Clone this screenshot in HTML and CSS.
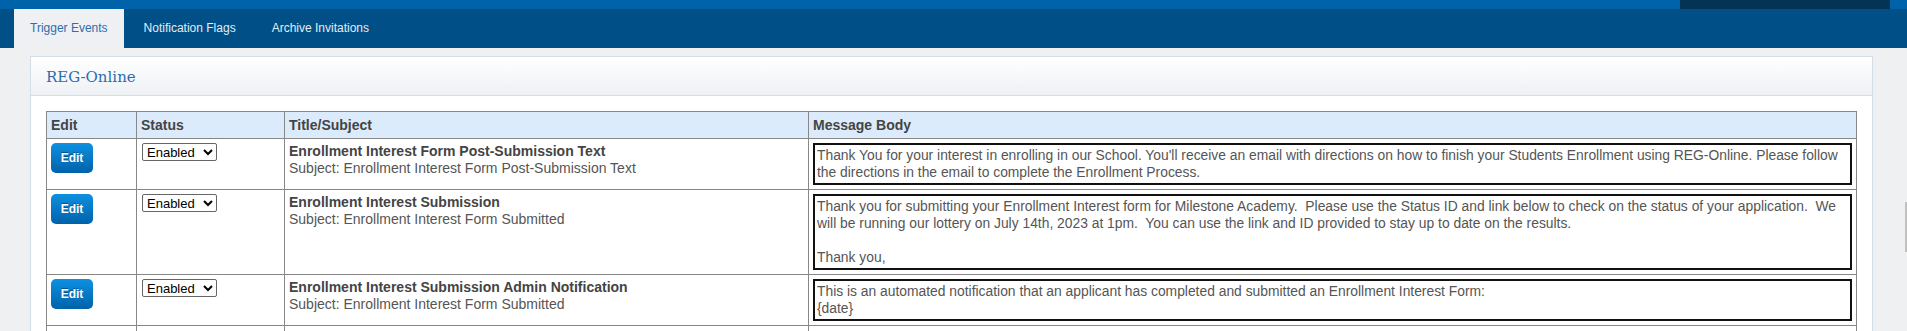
FILE: index.html
```html
<!DOCTYPE html>
<html lang="en">
<head>
    <meta charset="UTF-8">
    <title>Trigger Events</title>
    <link rel="stylesheet" href="styles.css">
</head>
<body>

    <div class="topbar">
        <div class="topbar-fill"></div>
        <div class="topbar-dark"></div>
        <div class="topbar-end"></div>
    </div>

    <div class="tabs">
        <div class="tab active">Trigger Events</div>
        <div class="tab">Notification Flags</div>
        <div class="tab">Archive Invitations</div>
    </div>

    <div class="main">
        <div class="panel">
            <div class="panel-head">REG-Online</div>
            <div class="panel-body">
                <table class="events">
                    <colgroup>
                        <col class="col-edit">
                        <col class="col-status">
                        <col class="col-title">
                        <col>
                    </colgroup>
                    <thead>
                        <tr>
                            <th>Edit</th>
                            <th>Status</th>
                            <th>Title/Subject</th>
                            <th>Message Body</th>
                        </tr>
                    </thead>
                    <tbody>
                        <tr>
                            <td><button class="edit">Edit</button></td>
                            <td><select class="status"><option>Enabled</option><option>Disabled</option></select></td>
                            <td>
                                <div class="title">Enrollment Interest Form Post-Submission Text</div>
                                <div class="subject">Subject: Enrollment Interest Form Post-Submission Text</div>
                            </td>
                            <td><div class="body">Thank You for your interest in enrolling in our School. You'll receive an email with directions on how to finish your Students Enrollment using REG-Online. Please follow the directions in the email to complete the Enrollment Process.</div></td>
                        </tr>
                        <tr>
                            <td><button class="edit">Edit</button></td>
                            <td><select class="status"><option>Enabled</option><option>Disabled</option></select></td>
                            <td>
                                <div class="title">Enrollment Interest Submission</div>
                                <div class="subject">Subject: Enrollment Interest Form Submitted</div>
                            </td>
                            <td><div class="body">Thank you for submitting your Enrollment Interest form for Milestone Academy.&nbsp; Please use the Status ID and link below to check on the status of your application.&nbsp; We will be running our lottery on July 14th, 2023 at 1pm.&nbsp; You can use the link and ID provided to stay up to date on the results.<br><br>Thank you,</div></td>
                        </tr>
                        <tr>
                            <td><button class="edit">Edit</button></td>
                            <td><select class="status"><option>Enabled</option><option>Disabled</option></select></td>
                            <td>
                                <div class="title">Enrollment Interest Submission Admin Notification</div>
                                <div class="subject">Subject: Enrollment Interest Form Submitted</div>
                            </td>
                            <td><div class="body">This is an automated notification that an applicant has completed and submitted an Enrollment Interest Form:<br>{date}</div></td>
                        </tr>
                        <tr class="row-next">
                            <td></td>
                            <td></td>
                            <td></td>
                            <td></td>
                        </tr>
                    </tbody>
                </table>
            </div>
        </div>
    </div>

    <div class="scroll-thumb"></div>

</body>
</html>
```

FILE: styles.css
```css
html, body {
    overflow: hidden;
}

body {
    margin: 0;
    background: #eef0f2;
    font-family: 'Liberation Sans', Arial, sans-serif;
    font-size: 14px;
    color: #555;
}

.topbar {
    display: flex;
    height: 9px;
    background: #0062a8;
}

.topbar-fill {
    flex: 1;
}

.topbar-dark {
    width: 210px;
    background: #033456;
}

.topbar-end {
    width: 17px;
}

.tabs {
    display: flex;
    gap: 4px;
    height: 39px;
    padding-left: 14px;
    background: #004f87;
}

.tab {
    padding: 0 16px;
    line-height: 39px;
    font-size: 12px;
    color: #e4ecf5;
}

.tab.active {
    background: #eef0f3;
    color: #2f6daa;
}

.main {
    padding: 8px 34px 0 30px;
}

.panel {
    background: #fff;
    border: 1px solid #d3dee9;
}

.panel-head {
    height: 38px;
    line-height: 40px;
    padding-left: 15px;
    border-bottom: 1px solid #d3dee9;
    background: linear-gradient(to bottom, #fff, #eef1f4);
    font-family: 'DejaVu Serif', 'Liberation Serif', serif;
    font-size: 15px;
    color: #2b6cb0;
}

.panel-body {
    padding: 15px 15px 20px;
}

.events {
    width: 100%;
    border-collapse: collapse;
    table-layout: fixed;
    border: 1px solid #888;
}

.col-edit {
    width: 90px;
}

.col-status {
    width: 148px;
}

.col-title {
    width: 524px;
}

.events th,
.events td {
    border: 1px solid #888;
    padding: 4px;
    text-align: left;
    vertical-align: top;
    line-height: 17px;
}

.events th {
    background: #dcebfb;
    color: #444;
    font-weight: bold;
    line-height: 18px;
}

.row-next td {
    height: 40px;
}

.edit {
    display: block;
    width: 42px;
    height: 30px;
    border: none;
    border-radius: 5px;
    background: linear-gradient(to bottom, #0d90e0, #0062aa);
    color: #fff;
    font-family: 'Liberation Sans', Arial, sans-serif;
    font-size: 12px;
    font-weight: bold;
    text-shadow: 0 -1px 0 rgba(0, 0, 0, 0.35);
    cursor: pointer;
}

.status {
    width: 75px;
    height: 18px;
    padding: 0;
    border: 1px solid #666;
    border-radius: 2px;
    background: #fff;
    font-family: 'Liberation Sans', Arial, sans-serif;
    font-size: 13px;
    color: #000;
    margin-left: 1px;
}

.title {
    font-weight: bold;
    color: #444;
}

.subject {
    color: #555;
}

.body {
    border: 2px solid #111;
    padding: 2px 1px 2px 2px;
    font-size: 13.85px;
    color: #555;
}

.scroll-thumb {
    position: absolute;
    right: 0;
    top: 202px;
    width: 2px;
    height: 50px;
    background: #c1c1c1;
}
```
